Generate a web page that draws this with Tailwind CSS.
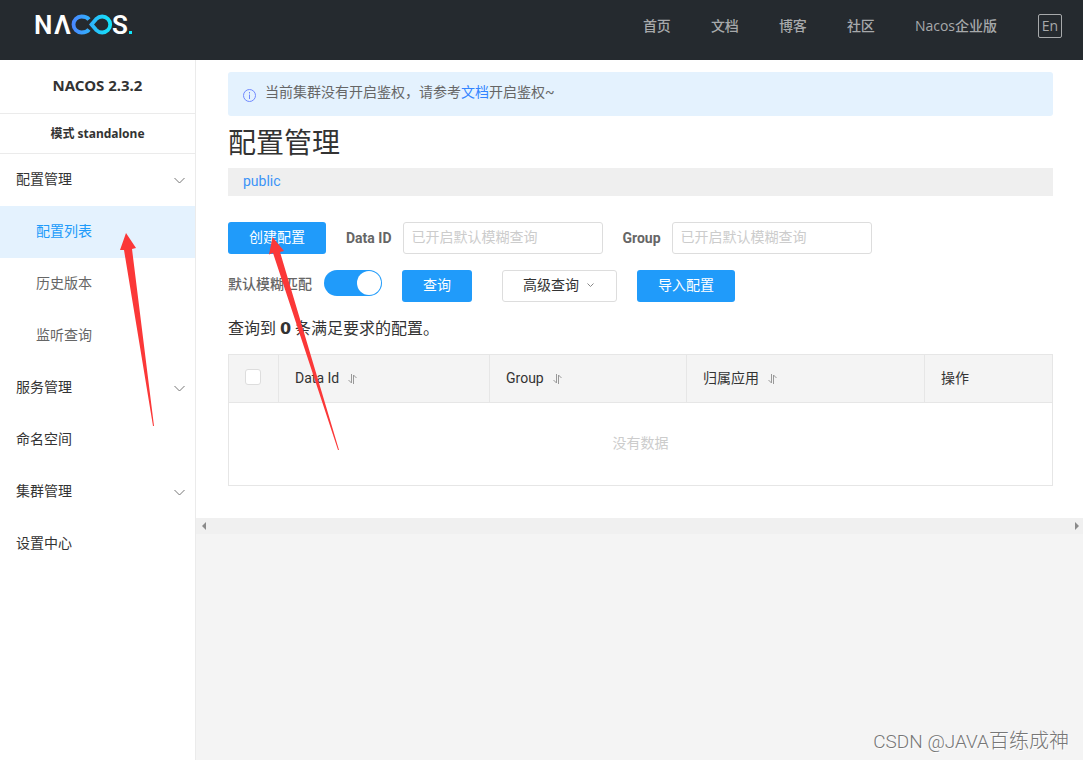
<!DOCTYPE html>
<html lang="zh-CN">
<head>
<meta charset="utf-8">
<meta name="viewport" content="width=device-width, initial-scale=1">
<title>Nacos</title>
<script src="https://cdn.jsdelivr.net/npm/@tailwindcss/browser@4"></script>
</head>
<body class="relative flex min-h-screen flex-col bg-[#f4f4f4] font-['Roboto','Noto_Sans_CJK_SC',sans-serif] text-sm text-[#333]">
<header class="flex h-15 items-start justify-between bg-[#252a2f] pr-[21px] pl-6 font-['Open_Sans','Noto_Sans_CJK_SC',sans-serif] text-[#a7a9ab]">
  <a href="#" aria-label="Nacos" class="block">
    <svg width="120" height="50" viewBox="24 0 120 50" fill="none">
      <defs><linearGradient id="loop" gradientUnits="userSpaceOnUse" x1="72" y1="0" x2="111" y2="0"><stop stop-color="#4a86ff"/><stop offset="1" stop-color="#12e4f8"/></linearGradient></defs>
      <g fill="#fff" font-family="Roboto" font-size="26" font-weight="600">
        <text x="34" y="34">N</text><text x="54" y="34">Λ</text><text x="112" y="34">S</text>
      </g>
      <path d="M89 19.500C87.500 17.500 84.500 16.500 81.500 16.500A8 8 0 0 0 81.500 32.500C84.500 32.500 87.500 31.500 89 29.500M91.500 24.500L96 19.200C98 17.300 100 16.500 102.200 16.500A8 8 0 0 1 102.200 32.500C100 32.500 98 31.700 96 29.800Z" stroke="url(#loop)" stroke-width="3.800"/>
      <rect x="129" y="31" width="3" height="3" fill="#12e4f8"/>
    </svg>
  </a>
  <nav class="flex items-start pt-3.5 leading-6 font-medium">
    <a href="#" class="mr-10">首页</a>
    <a href="#" class="mr-10">文档</a>
    <a href="#" class="mr-10">博客</a>
    <a href="#" class="mr-10">社区</a>
    <a href="#" class="mr-[41px]">Nacos企业版</a>
    <button class="h-6 w-6 rounded-xs border border-[#a7a9ab] leading-5">En</button>
  </nav>
</header>
<div class="flex flex-1">
  <aside class="w-49 shrink-0 border-r border-[#ebebeb] bg-white">
    <div class="border-b border-[#ebebeb] pt-[15px] pb-[17px] text-center font-['Noto_Sans','Noto_Sans_CJK_SC',sans-serif] text-[15px] leading-[21px] font-bold">NACOS 2.3.2</div>
    <div class="border-b border-[#ebebeb] pt-2 pb-2 text-center font-['Noto_Sans','Noto_Sans_CJK_SC',sans-serif] text-xs leading-[23px] font-bold">模式 standalone</div>
    <nav class="leading-[50px]">
      <a href="#" class="flex h-13 items-start justify-between pr-2.5 pl-4">配置管理<svg class="mt-[23px] -mr-px" width="13" height="8" viewBox="0 0 13 8" fill="none" stroke="#777"><path d="M1.500 1L6.500 6L11.500 1"/></svg></a>
      <a href="#" class="block h-13 bg-[#e4f2fe] pl-9 text-[#209bfa]">配置列表</a>
      <a href="#" class="block h-13 pl-9 text-[#666]">历史版本</a>
      <a href="#" class="block h-13 pl-9 text-[#666]">监听查询</a>
      <a href="#" class="flex h-13 items-start justify-between pr-2.5 pl-4">服务管理<svg class="mt-[23px] -mr-px" width="13" height="8" viewBox="0 0 13 8" fill="none" stroke="#777"><path d="M1.500 1L6.500 6L11.500 1"/></svg></a>
      <a href="#" class="block h-13 px-4">命名空间</a>
      <a href="#" class="flex h-13 items-start justify-between pr-2.5 pl-4">集群管理<svg class="mt-[23px] -mr-px" width="13" height="8" viewBox="0 0 13 8" fill="none" stroke="#777"><path d="M1.500 1L6.500 6L11.500 1"/></svg></a>
      <a href="#" class="block h-13 px-4">设置中心</a>
    </nav>
  </aside>
  <div class="min-w-0 flex-1">
    <main class="bg-white pt-3 pr-[30px] pb-8 pl-8">
      <div class="flex h-11 items-start gap-2 rounded-[3px] bg-[#e4f2fe] pl-3.5 text-[#666]">
        <svg class="mt-4" width="15" height="15" viewBox="0 0 15 15" fill="none" stroke="#7089ff"><circle cx="7.500" cy="7.500" r="6"/><path d="M7.500 6.500V11M7.500 4V5.500"/></svg>
        <p class="leading-10">当前集群没有开启鉴权，请参考<a href="#" class="text-[#3385ff]">文档</a>开启鉴权~</p>
      </div>
      <h1 class="mt-2 mb-1 text-[28px] leading-10 font-normal">配置管理</h1>
      <div class="bg-[#efefef] px-[15px] pb-0.5 leading-[26px]"><a href="#" class="text-[#3c94f7]">public</a></div>
      <form class="mt-[26px] text-[#666]">
        <div class="flex items-center">
          <button type="button" class="mr-5 h-8 w-[98px] rounded-[3px] bg-[#209bfa] pb-0.5 text-white">创建配置</button>
          <label for="data-id" class="mr-[11px] font-bold">Data ID</label>
          <input id="data-id" placeholder="已开启默认模糊查询" class="mr-5 h-8 w-50 rounded-[3px] border border-[#ddd] bg-white px-2 pb-0.5 outline-none placeholder:text-[#ccc]">
          <label for="group" class="mr-[11px] font-bold">Group</label>
          <input id="group" placeholder="已开启默认模糊查询" class="h-8 w-50 rounded-[3px] border border-[#ddd] bg-white px-2 pb-0.5 outline-none placeholder:text-[#ccc]">
        </div>
        <div class="mt-4 flex items-start">
          <label for="fuzzy" class="mr-3 leading-7 font-medium">默认模糊匹配</label>
          <input id="fuzzy" type="checkbox" role="switch" checked class="mr-5 flex h-[26px] w-[58px] appearance-none justify-end rounded-full bg-[#209bfa] p-px before:h-6 before:w-6 before:rounded-full before:bg-white">
          <button type="button" class="mr-[30px] h-8 w-[70px] rounded-[3px] bg-[#209bfa] pb-0.5 text-white">查询</button>
          <button type="button" class="mr-5 flex h-8 w-[115px] items-center justify-center gap-2 rounded-[3px] border border-[#ddd] bg-white pr-0.5 pb-0.5 text-[#333]">高级查询<svg width="7" height="5" viewBox="0 0 7 5" fill="none" stroke="#888"><path d="M.5 .5L3.500 3.500L6.500 .5"/></svg></button>
          <button type="button" class="h-8 w-[98px] rounded-[3px] bg-[#209bfa] pb-0.5 text-white">导入配置</button>
        </div>
      </form>
      <p class="mt-[13px] mb-[11px] text-base leading-7">查询到 <strong class="font-['DejaVu_Sans']">0</strong> 条满足要求的配置。</p>
      <table class="w-full table-fixed border-collapse border border-[#e6e6e6]">
        <colgroup><col class="w-[50px]"><col class="w-[211px]"><col class="w-[197px]"><col class="w-[238px]"><col></colgroup>
        <thead>
          <tr class="h-12 bg-[#f4f4f4] text-left">
            <th class="border border-[#e6e6e6] px-4 pb-1"><input type="checkbox" aria-label="全选" class="block h-4 w-4 appearance-none rounded-[3px] border border-[#ddd] bg-white"></th>
            <th class="border border-[#e6e6e6] px-4 pb-0.5 font-normal"><span class="flex items-center gap-[9px]">Data Id<svg class="mt-0.5" width="9" height="10" viewBox="0 0 9 10" fill="none" stroke="#999"><path d="M3.500 0V9L.5 6M5.500 10V1L8.500 4"/></svg></span></th>
            <th class="border border-[#e6e6e6] px-4 pb-0.5 font-normal"><span class="flex items-center gap-[9px]">Group<svg class="mt-0.5" width="9" height="10" viewBox="0 0 9 10" fill="none" stroke="#999"><path d="M3.500 0V9L.5 6M5.500 10V1L8.500 4"/></svg></span></th>
            <th class="border border-[#e6e6e6] px-4 pb-0.5 font-normal"><span class="flex items-center gap-[9px]">归属应用<svg class="mt-0.5" width="9" height="10" viewBox="0 0 9 10" fill="none" stroke="#999"><path d="M3.500 0V9L.5 6M5.500 10V1L8.500 4"/></svg></span></th>
            <th class="border border-[#e6e6e6] px-4 pb-0.5 font-normal">操作</th>
          </tr>
        </thead>
        <tbody><tr><td colspan="5" class="h-[83px] pb-0.5 text-center text-[#ccc]">没有数据</td></tr></tbody>
      </table>
    </main>
    <div class="flex h-4 items-center justify-between bg-[#f0f0f0] pr-[3px] pl-1">
      <svg width="8" height="8" viewBox="0 0 8 8" fill="#8b8b8b"><path d="M6 0V8L2 4Z"/></svg>
      <svg width="8" height="8" viewBox="0 0 8 8" fill="#8b8b8b"><path d="M3 0V8L7 4Z"/></svg>
    </div>
  </div>
</div>
<!-- Annotation arrows -->
<svg class="pointer-events-none absolute top-0 left-0" width="400" height="470" viewBox="0 0 400 470" fill="#fb3838" aria-hidden="true">
  <path d="M126 233L136 248L132 249L154 426H153L124 250L120 250Z"/>
  <path d="M272.500 237L284 251L280 252L339 450H338L273 253L269 254.500Z"/>
</svg>
<p class="absolute right-3.5 bottom-[3px] text-xl leading-[30px] font-light text-[#777] [text-shadow:1px_1px_1px_#fff]"><span class="text-[19px]">CSDN @JAVA</span>百练成神</p>
</body>
</html>
